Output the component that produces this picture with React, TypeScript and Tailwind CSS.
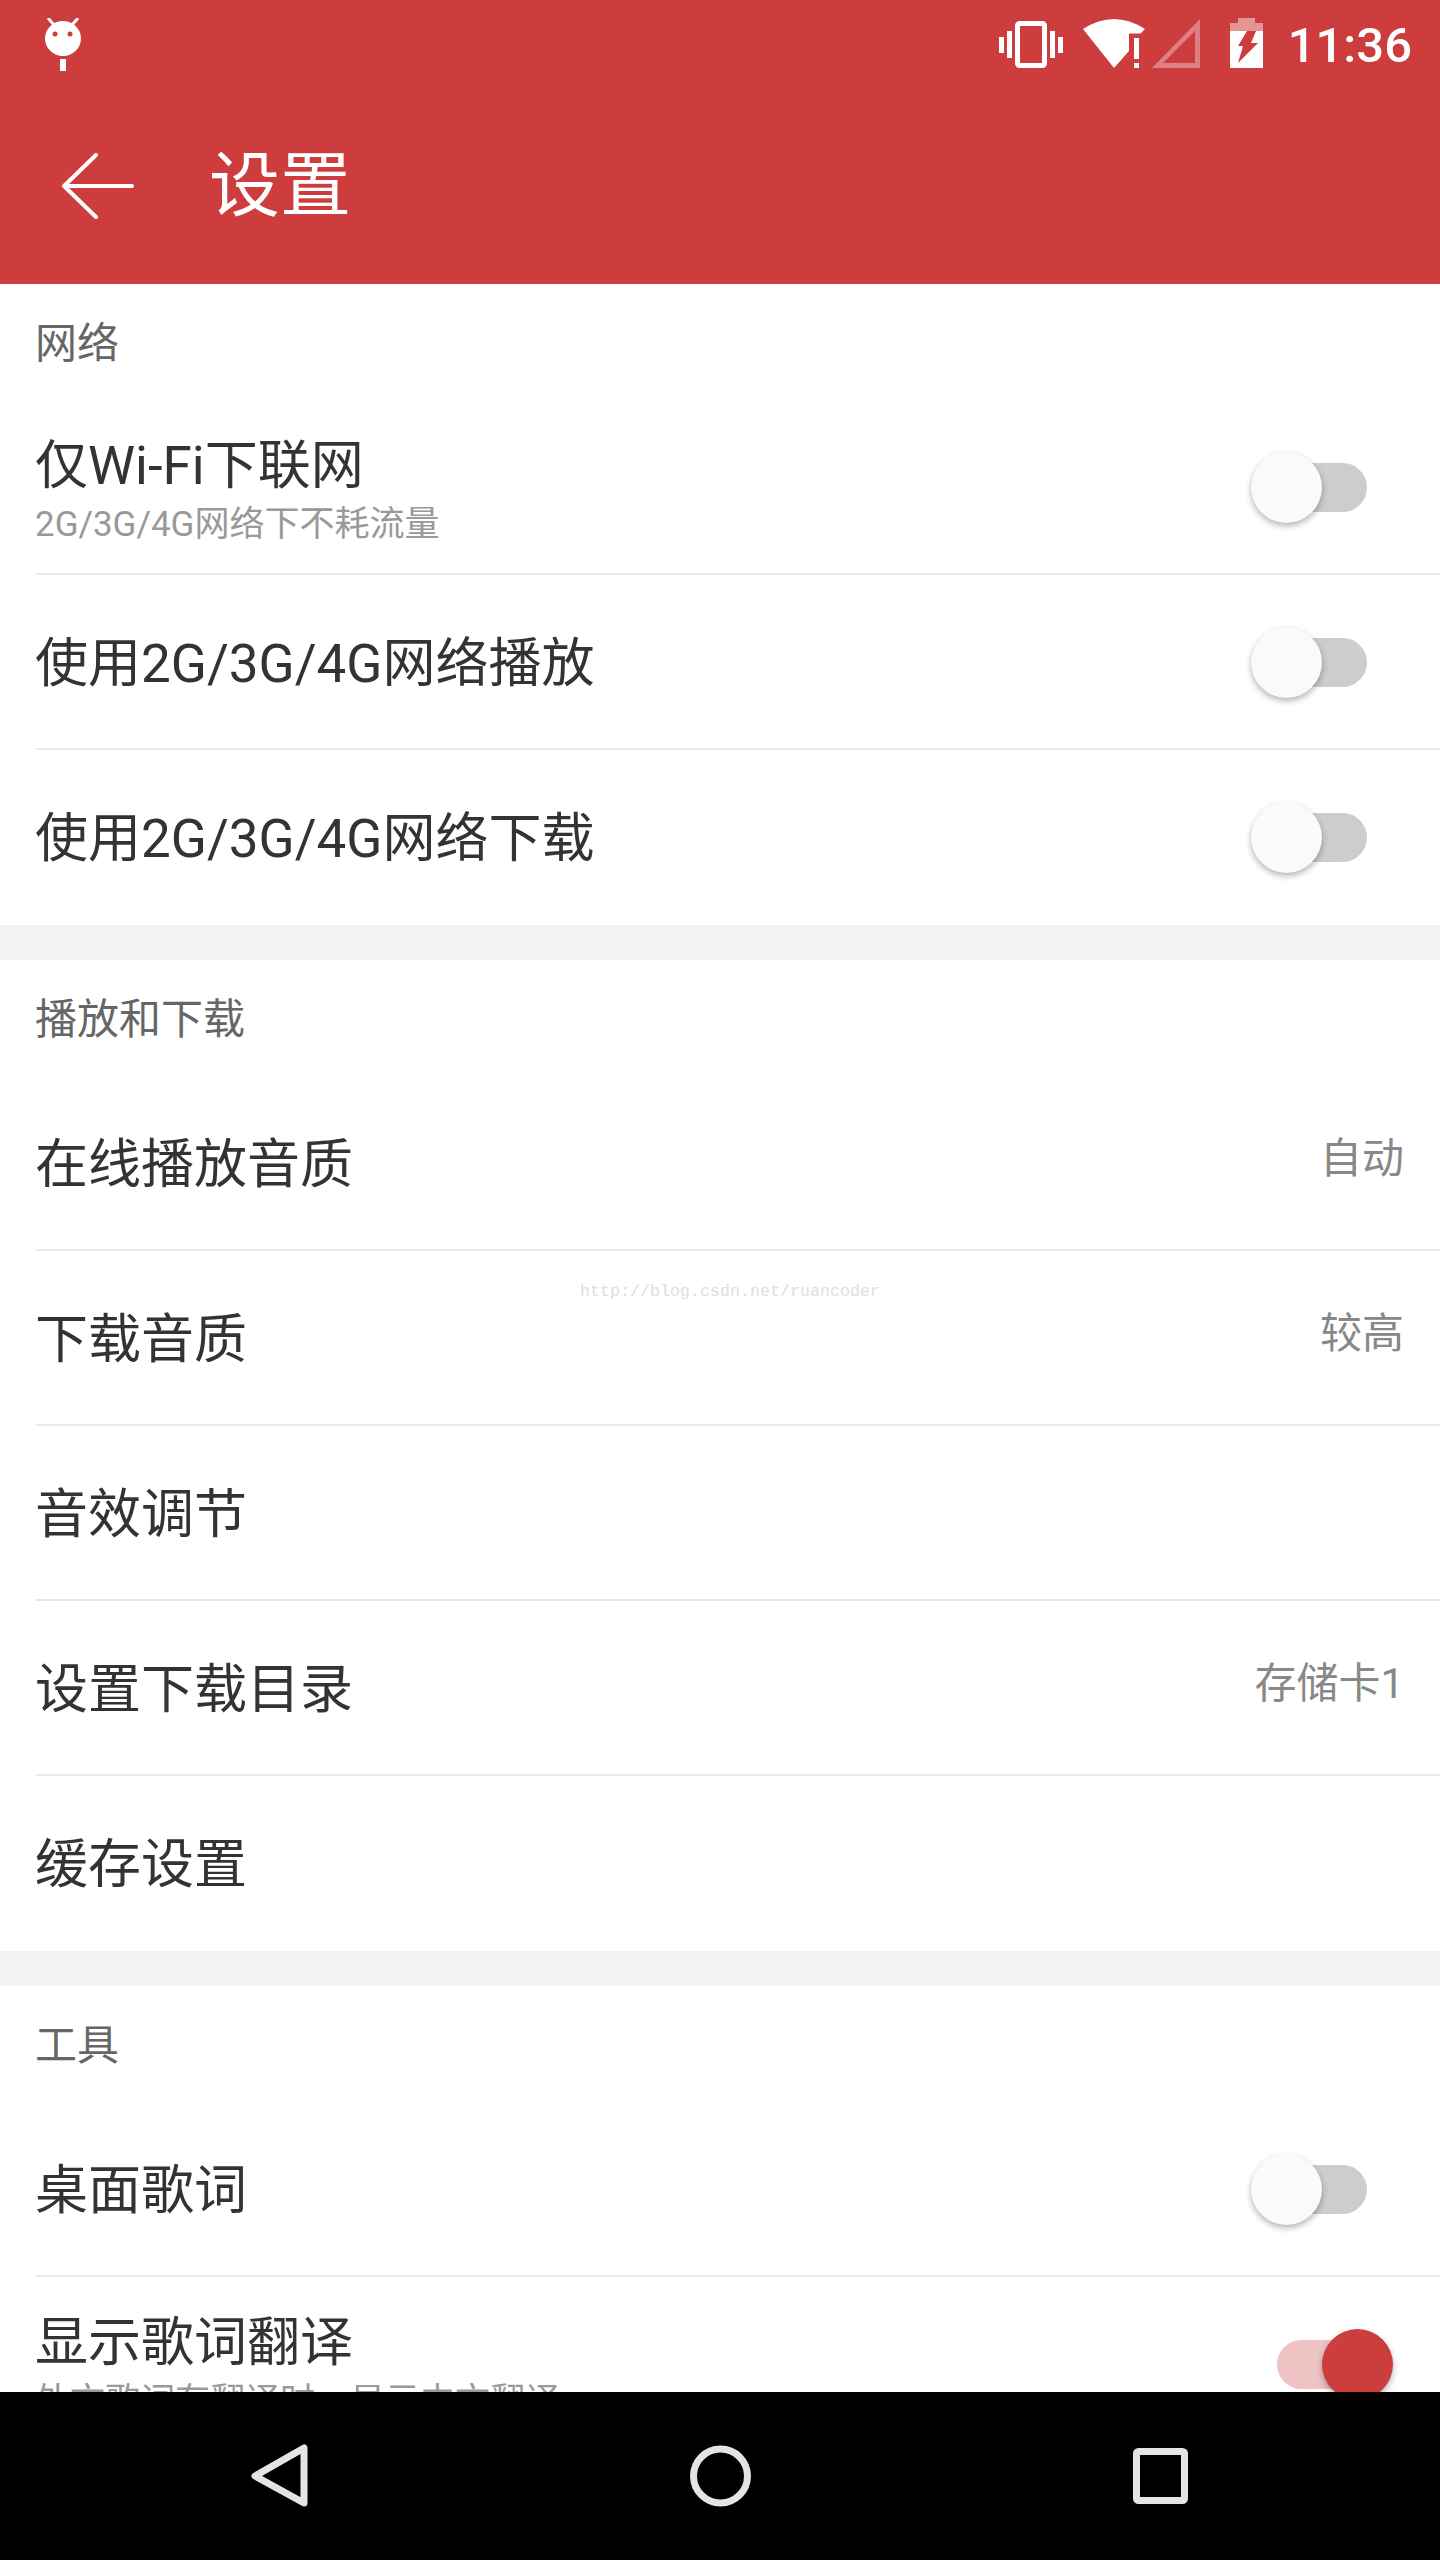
const fontStack = 'font-["Roboto","Noto_Sans_CJK_SC",sans-serif]';

function StatusIcons() {
  return (
    <svg width="270" height="60" viewBox="995 14 270 60" className="mt-[14px] shrink-0">
      {/* vibrate */}
      <rect x="1016.5" y="23.5" width="27" height="42" rx="2" fill="none" stroke="#fff" strokeWidth="5" />
      <path d="M998 37h5v16h-5zM1006 31h5v27h-5zM1049 31h5v27h-5zM1057 37h5v16h-5z" fill="#fff" />
      {/* wifi with no-internet mark */}
      <path d="M1082 29Q1113 9 1144 29L1139.5 33.5H1128V51L1113 68Z" fill="#fff" />
      <path d="M1133 38h5v21h-5zM1133 63h5v5h-5z" fill="#fff" />
      {/* empty signal */}
      <path d="M1151 68L1199 19V68ZM1162 63H1194V31Z" fill="#fff" fillOpacity="0.35" fillRule="evenodd" />
      {/* charging battery */}
      <path d="M1237 18h17v5h8v8h-33v-8h8z" fill="#fff" fillOpacity="0.45" />
      <path
        d="M1229 31H1262V68H1229ZM1246 31L1237 46H1242L1237 63L1257 43H1250L1255 31Z"
        fill="#fff"
        fillRule="evenodd"
      />
    </svg>
  );
}

function Switch({ on = false }: { on?: boolean }) {
  return (
    <div className="relative mt-[2px] h-[71px] w-[142px] shrink-0">
      <div
        className={`absolute left-[26px] top-[11px] h-[49px] w-[90px] rounded-full ${
          on ? 'bg-[#efc3c4]' : 'bg-[#cdcdcd]'
        }`}
      />
      <div
        className={`absolute top-0 h-[71px] w-[71px] rounded-full shadow-[0_3px_6px_rgba(0,0,0,0.3)] ${
          on ? 'right-0 bg-[#cc3d3e]' : 'left-0 bg-[#fafafa]'
        }`}
      />
    </div>
  );
}

function SectionLabel({ children }: { children: string }) {
  return (
    <div className="flex h-[116px] items-start pl-[35px] pt-[32px] text-[42px] leading-[56px] text-[#666]">
      {children}
    </div>
  );
}

type RowProps = {
  title: string;
  sub?: string;
  value?: string;
  toggle?: 'on' | 'off';
  last?: boolean;
};

function Row({ title, sub, value, toggle, last }: RowProps) {
  return (
    <div className="pl-[36px]">
      <div
        className={`flex h-[175px] items-center justify-between border-b-2 ${
          last ? 'border-transparent' : 'border-[#e8e8e8]'
        } ${toggle ? 'pr-[47px]' : 'pr-[36px]'}`}
      >
        <div className={`-ml-[1px] flex min-w-0 flex-col ${sub ? '' : 'mt-[4px]'}`}>
          <div className="text-[53px] leading-[70px] text-[#333]">{title}</div>
          {sub && <div className="-mb-[6px] text-[35px] leading-[48px] text-[#999]">{sub}</div>}
        </div>
        {value && <div className="mb-[8px] text-[42px] leading-[56px] text-[#888]">{value}</div>}
        {toggle && <Switch on={toggle === 'on'} />}
      </div>
    </div>
  );
}

export default function App() {
  return (
    <div className={`relative flex h-[2560px] w-[1440px] flex-col overflow-hidden bg-white ${fontStack}`}>
      {/* Status bar + toolbar */}
      <header className="h-[284px] shrink-0 bg-[#cd3d3e] text-white">
        <div className="flex h-[92px] items-start justify-between pl-[44px] pr-[28px]">
          <svg width="40" height="54" viewBox="44 18 40 54" className="mt-[18px] shrink-0">
            <ellipse cx="63" cy="38.5" rx="18" ry="17.5" fill="#fff" />
            <path d="M48 18L54 25M78 18L72 25" stroke="#fff" strokeWidth="3" />
            <rect x="60" y="59" width="6" height="12" fill="#fff" />
            <circle cx="55" cy="34" r="2.5" fill="#cd3d3e" />
            <circle cx="70" cy="34" r="2.5" fill="#cd3d3e" />
          </svg>
          <div className="flex items-start gap-[22px]">
            <StatusIcons />
            <span className="text-[49px] font-medium leading-[92px]">11:36</span>
          </div>
        </div>
        <div className="flex h-[192px] items-center pl-[62px]">
          <svg width="72" height="66" viewBox="62 153 72 66" fill="none" className="mb-[4px] shrink-0">
            <path
              d="M96 155L64 186L96 217M64 186H132"
              stroke="#fff"
              strokeWidth="4"
              strokeLinecap="round"
              strokeLinejoin="round"
            />
          </svg>
          <h1 className="mb-[4px] ml-[75px] text-[71px] font-normal leading-[90px]">设置</h1>
        </div>
      </header>

      <main className="min-h-0 flex-1 overflow-hidden">
        <SectionLabel>网络</SectionLabel>
        <Row title="仅Wi-Fi下联网" sub="2G/3G/4G网络下不耗流量" toggle="off" />
        <Row title="使用2G/3G/4G网络播放" toggle="off" />
        <Row title="使用2G/3G/4G网络下载" toggle="off" last />

        <div className="h-[35px] bg-[#f2f3f5]" />

        <SectionLabel>播放和下载</SectionLabel>
        <Row title="在线播放音质" value="自动" />
        <Row title="下载音质" value="较高" />
        <Row title="音效调节" />
        <Row title="设置下载目录" value="存储卡1" />
        <Row title="缓存设置" last />

        <div className="h-[35px] bg-[#f2f3f5]" />

        <SectionLabel>工具</SectionLabel>
        <Row title="桌面歌词" toggle="off" />
        <Row title="显示歌词翻译" sub="外文歌词有翻译时，显示中文翻译" toggle="on" last />
      </main>

      {/* Android nav bar */}
      <nav className="flex h-[168px] shrink-0 items-center justify-center bg-black">
        <svg width="1440" height="168" viewBox="0 2392 1440 168" fill="none" stroke="#e4e4e4" strokeWidth="7">
          <path d="M304 2448V2503L255 2476Z" strokeLinejoin="round" />
          <circle cx="720.5" cy="2476" r="27" />
          <rect x="1136.5" y="2451.5" width="48" height="49" rx="2" />
        </svg>
      </nav>

      {/* image watermark */}
      <div className='absolute left-[580px] top-[1281px] font-["Liberation_Mono",monospace] text-[16.67px] leading-[22px] text-[#dfdeda]'>
        http://blog.csdn.net/ruancoder
      </div>
    </div>
  );
}
